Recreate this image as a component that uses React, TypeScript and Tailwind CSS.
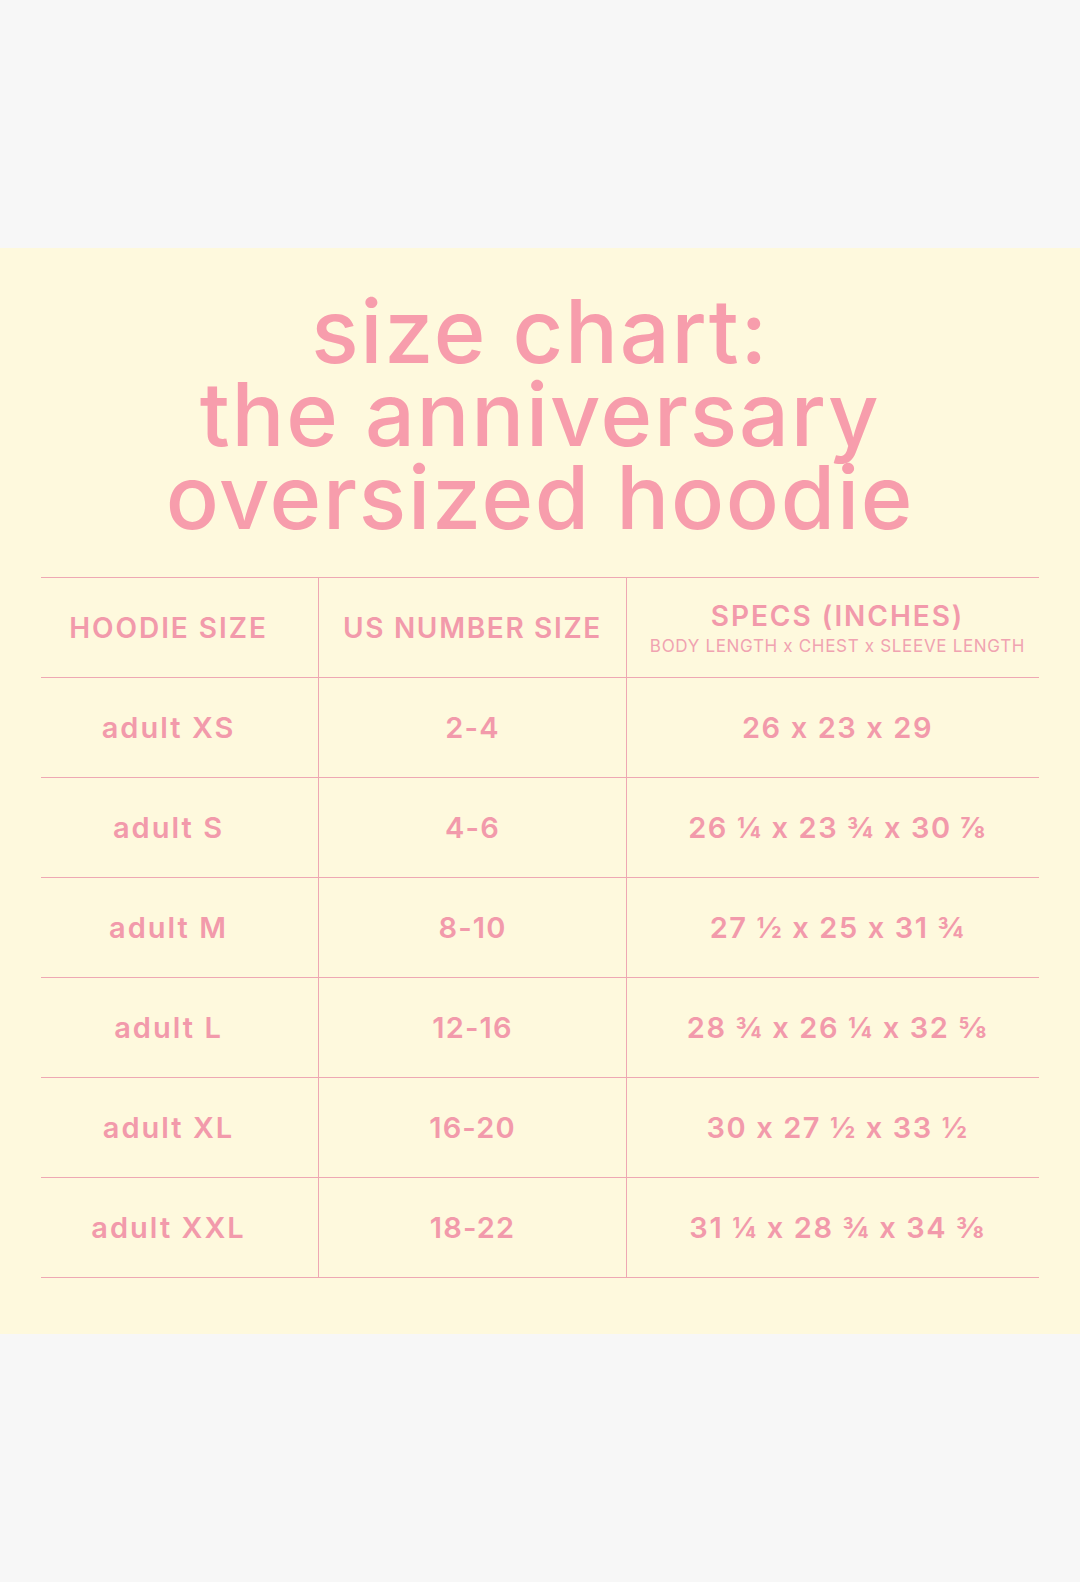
const rows = [
  { size: 'adult XS', us: '2-4', specs: '26 x 23 x 29' },
  { size: 'adult S', us: '4-6', specs: '26 ¼ x 23 ¾ x 30 ⅞' },
  { size: 'adult M', us: '8-10', specs: '27 ½ x 25 x 31 ¾' },
  { size: 'adult L', us: '12-16', specs: '28 ¾ x 26 ¼ x 32 ⅝' },
  { size: 'adult XL', us: '16-20', specs: '30 x 27 ½ x 33 ½' },
  { size: 'adult XXL', us: '18-22', specs: '31 ¼ x 28 ¾ x 34 ⅜' },
];

const rowClass =
  'grid grid-cols-[277px_308px_1fr] h-[100px] border-b-[1.5px] border-[#eea8b3]';

export default function App() {
  return (
    <div className="min-h-[1582px] w-full bg-[#f7f7f7] font-['Inter',sans-serif] text-[#f29aab] [font-feature-settings:'calt'_0]">
      <div className="h-[248px]" />
      <section className="bg-[#fef9dd] pt-[42px] pb-[56px] px-[41px]">
        <h1 className="text-center text-[88px] leading-[83px] font-medium tracking-[0.02em] text-[#f79dac]">
          size chart:
          <br />
          the anniversary
          <br />
          oversized hoodie
        </h1>

        <div className="mt-[38px] border-t-[1.5px] border-[#eea8b3]">
          <div className={rowClass}>
            <div className="flex items-center justify-center pr-[22px] text-[28px] font-semibold tracking-[0.07em]">
              HOODIE SIZE
            </div>
            <div className="flex items-center justify-center border-l-[1.5px] border-[#eea8b3] text-[28px] font-semibold tracking-[0.06em]">
              US NUMBER SIZE
            </div>
            <div className="flex flex-col items-center justify-center border-l-[1.5px] border-[#eea8b3] pl-[9px]">
              <span className="text-[28px] leading-[34px] font-semibold tracking-[0.07em]">SPECS (INCHES)</span>
              <span className="mt-[2px] text-[17px] leading-[22px] text-[#f0a3b1] tracking-[0.04em]">
                BODY LENGTH x CHEST x SLEEVE LENGTH
              </span>
            </div>
          </div>

          {rows.map((r) => (
            <div key={r.size} className={rowClass}>
              <div className="flex items-center justify-center pr-[22px] text-[29px] font-semibold tracking-[0.07em]">
                {r.size}
              </div>
              <div className="flex items-center justify-center border-l-[1.5px] border-[#eea8b3] text-[29px] font-semibold tracking-[0.04em]">
                {r.us}
              </div>
              <div className="flex items-center justify-center border-l-[1.5px] border-[#eea8b3] pl-[9px] text-[29px] font-semibold tracking-[0.055em]">
                {r.specs}
              </div>
            </div>
          ))}
        </div>
      </section>
    </div>
  );
}
